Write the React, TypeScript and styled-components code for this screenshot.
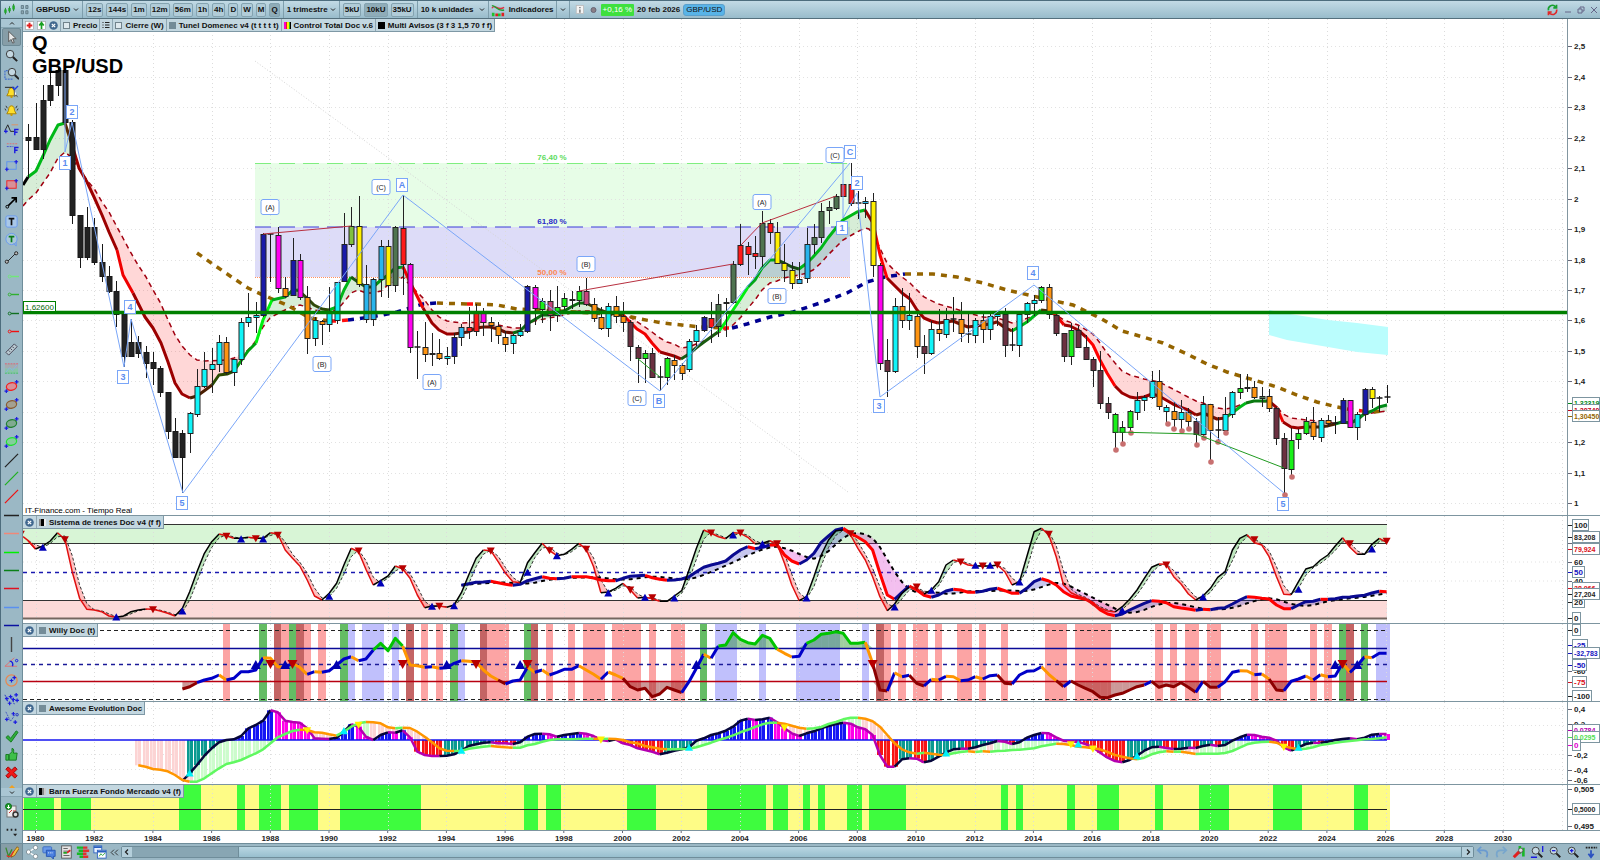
import React from "react";
import styled, { createGlobalStyle } from "styled-components";

const GlobalStyle = createGlobalStyle`
  * { box-sizing: border-box; }
  body { margin: 0; background: #fff; }
  body, button, select, input { font-family: "Liberation Sans", Arial, sans-serif; font-size: 8px; color: #111; }
`;

/* ---------- page frame ---------- */

const Page = styled.div`
  display: grid;
  grid-template-rows: 19px 1fr 17px;
  min-height: 100vh;
`;
const Toolbar = styled.header`
  display: flex;
  align-items: center;
  background: linear-gradient(#c2dae5, #99bccb);
  border-top: 1px solid #4d6d7d;
  border-bottom: 1px solid #55707d;
  border-left: 1px solid #4d6d7d;
  padding-left: 1px;
  overflow: hidden;
  white-space: nowrap;
`;
const Group = styled.div<{ $pad?: number; $gap?: number; $open?: boolean }>`
  display: flex;
  align-items: center;
  align-self: stretch;
  gap: ${(p) => p.$gap ?? 3}px;
  padding: 0 ${(p) => p.$pad ?? 3}px;
  border-right: ${(p) => (p.$open ? 0 : 1)}px solid #7e9eac;
`;
const TimeButton = styled.button<{ $on?: boolean }>`
  height: 14px;
  padding: 0 1px;
  border: 1px solid #84a3b0;
  border-radius: 2px;
  background: ${(p) => (p.$on ? "#8facb8" : "#b1ccd8")};
  font-weight: 700;
  line-height: 12px;
`;
const Picker = styled.label<{ $w: number }>`
  display: flex;
  align-items: center;
  width: ${(p) => p.$w}px;
  select {
    appearance: none;
    flex: 1;
    min-width: 0;
    border: 0;
    padding: 0;
    background: transparent;
    font-weight: 700;
    line-height: 12px;
  }
`;
const PlainButton = styled.button`
  display: flex;
  align-items: center;
  gap: 4px;
  padding: 0;
  border: 0;
  background: transparent;
  font-weight: 700;
`;
const Change = styled.span`
  height: 12px;
  padding: 0 2px;
  background: #3fe03f;
  color: #fff;
  border-radius: 1px;
  line-height: 12px;
`;
const DateText = styled.span`
  font-weight: 700;
`;
const PairTag = styled.span`
  height: 12px;
  padding: 0 2px;
  border: 1px solid #5aa0cc;
  border-radius: 3px;
  background: #58b4e8;
  line-height: 10px;
`;
const Spacer = styled.span`
  flex: 1;
`;

const Middle = styled.main`
  display: grid;
  grid-template-columns: 23px minmax(0, 1fr);
`;
const Sidebar = styled.nav`
  display: flex;
  flex-direction: column;
  background: #9bb8c5;
  border-left: 1px solid #4d6d7d;
  border-right: 1px solid #6f8d9a;
`;
const Fold = styled.button`
  height: 9px;
  padding: 0;
  border: 0;
  border-bottom: 1px solid #86a5b2;
  background: #a9c6d3;
  display: grid;
  place-items: center;
`;
const ToolList = styled.div`
  flex: 1;
  display: grid;
  grid-auto-rows: 1fr;
`;
const Tool = styled.button<{ $on?: boolean }>`
  display: grid;
  place-items: center;
  min-height: 0;
  padding: 0;
  margin: 0 1px;
  border: 1px solid ${(p) => (p.$on ? "#6e8b97" : "transparent")};
  border-radius: 2px;
  background: ${(p) => (p.$on ? "#869da7" : "transparent")};
`;
const NextTool = styled.div`
  height: 6px;
  display: grid;
  place-items: end center;
`;
const SideFoot = styled.div`
  height: 46px;
  display: flex;
  flex-direction: column;
  align-items: center;
  justify-content: space-evenly;
`;

const Charts = styled.div`
  display: grid;
  grid-template-rows: minmax(497px, 1fr) 108px 78px 83px 46px 12px;
`;
const Panel = styled.section`
  position: relative;
  display: grid;
  grid-template-columns: minmax(0, 1fr) 33px;
  border-bottom: 1px solid #7d95a0;
  min-height: 0;
`;
const Plot = styled.svg`
  display: block;
  width: 100%;
  height: 100%;
`;
const Scale = styled.svg`
  display: block;
  width: 33px;
  height: 100%;
  border-left: 1px solid #8296a0;
  text {
    font-weight: 700;
  }
`;
const Tabs = styled.div`
  position: absolute;
  left: 0;
  top: 0;
  display: flex;
  height: 13px;
  border: 1px solid #7e98a5;
  border-left: 0;
  border-top: 0;
  background: #c3d7e0;
`;
const Tab = styled.label`
  display: flex;
  align-items: center;
  gap: 3px;
  padding: 0 2px;
  font-weight: 700;
  white-space: nowrap;
  border-left: 1px solid #8fa7b3;
  &:first-child { border-left: 0; }
`;
const Tick = styled.input`
  appearance: none;
  width: 7px;
  height: 7px;
  margin: 0;
  border: 1px solid #71838c;
  background: #dfe9ee;
`;
const Swatch = styled.i<{ $fill: string }>`
  width: 7px;
  height: 7px;
  background: ${(p) => p.$fill};
`;
const IconButton = styled.button`
  display: grid;
  place-items: center;
  padding: 0;
  border: 0;
  background: transparent;
`;
const Title = styled.h1`
  position: absolute;
  left: 9px;
  top: 13px;
  margin: 0;
  font-size: 20px;
  line-height: 23px;
  color: #000;
  pointer-events: none;
`;
const Source = styled.small`
  position: absolute;
  left: 2px;
  bottom: 0;
  font-size: 8px;
  line-height: 9px;
  color: #000;
`;
const YearRow = styled.svg`
  display: block;
  width: 100%;
  height: 12px;
  text {
    font-weight: 700;
    font-size: 8px;
  }
`;

const Footer = styled.footer`
  display: flex;
  align-items: center;
  background: #9bb8c5;
  border-top: 1px solid #6f8d9a;
  border-left: 1px solid #4d6d7d;
`;
const FootTools = styled.div<{ $gap?: number }>`
  display: flex;
  align-items: center;
  gap: ${(p) => p.$gap ?? 3}px;
  padding: 0 2px;
`;
const PencilCell = styled.div`
  display: grid;
  place-items: center;
  width: 22px;
  height: 100%;
  background: #869da7;
  border-right: 1px solid #6f8d9a;
`;
const ScrollBar = styled.div`
  flex: 1;
  display: grid;
  grid-template-columns: 10px 106px minmax(0, 1fr) 11px;
  height: 12px;
  border: 1px solid #6f8d9a;
  border-radius: 2px;
  background: #88a6b3;
`;
const ScrollEnd = styled.button`
  display: grid;
  place-items: center;
  padding: 0;
  border: 0;
  background: #b4cfdb;
`;
const Thumb = styled.div`
  grid-column: 3;
  background: linear-gradient(#b9d6e2, #98bfce);
  border: solid #6f8d9a;
  border-width: 0 1px;
`;

/* ---------- icons ---------- */

const Ico = ({ children, s = 16 }: { children: React.ReactNode; s?: number }) => (
  <svg width={s} height={s} viewBox="0 0 16 16" fill="none" stroke="#222" strokeWidth="1" aria-hidden>
    {children}
  </svg>
);
const Chevron = ({ up }: { up?: boolean }) => (
  <svg width="6" height="5" viewBox="0 0 6 5" fill="none" stroke="#222" aria-hidden>
    <path d={up ? "M1 3.5 3 1.5 5 3.5" : "M1 1.5 3 3.5 5 1.5"} />
  </svg>
);
const plus = (x: number, y: number) => <path key={`${x}-${y}`} d={`M${x - 2} ${y}h4M${x} ${y - 2}v4`} stroke="#1a1ae0" strokeWidth="1.3" />;
const lens = (
  <>
    <circle cx="6.5" cy="6.5" r="4" fill="#c4d8e2" stroke="#333" />
    <path d="M9.5 9.5 14 14" stroke="#222" strokeWidth="2.2" />
  </>
);
const bell = (
  <>
    <path d="M8 3c-2.500 0-3 2.500-3.200 5L3 11.500h10L11.200 8C11 5.500 10.500 3 8 3z" fill="#ffe02a" stroke="#a88000" />
    <circle cx="8" cy="12.500" r="1.300" fill="#c89a00" stroke="none" />
  </>
);
const pin = (c: string) => (
  <>
    <circle cx="6" cy="8" r="1.500" stroke={c} />
    <path d="M7.500 8H16" stroke={c} strokeWidth="1.500" />
  </>
);
const ellipse = (c: string, f: string) => (
  <>
    <ellipse cx="8" cy="8" rx="5.500" ry="4" transform="rotate(-12 8 8)" stroke={c} fill={f} strokeWidth="1.300" />
    {plus(2.5, 13)}
    {plus(13.5, 3)}
  </>
);
const rectTool = (c: string, f: string) => (
  <>
    <rect x="3" y="4" width="10" height="8" stroke={c} fill={f} />
    {plus(3, 12)}
    {plus(13, 4)}
  </>
);
const slash = (c: string) => <path d="M1 15 15 1" stroke={c} strokeWidth="1.300" />;
const flat = (c: string) => <path d="M0 8h16" stroke={c} strokeWidth="1.600" />;

const tools: [string, React.ReactNode][] = [
  ["Puntero", <path d="M5 1.500v11l2.500-2.500 1.700 4 1.700-.7-1.700-4H13z" fill="#e8e8e8" stroke="#555" />],
  ["Zoom", lens],
  ["Zoom de zona", <><g transform="translate(2)">{lens}</g><path d="M4 5H1v9h9" stroke="#2a5ad0" strokeDasharray="2 1" /></>],
  ["Alerta", <>{bell}<path d="M1 2.500h10" stroke="#222" /><path d="M9 2l2 3 4-4" stroke="#1a3ae0" strokeWidth="1.500" /><path d="M11 5v7l2-1.500 1.500 2.500" stroke="#555" fill="#fff" /></>],
  ["Alarmas", <>{bell}<path d="M2 3 3.500 5.500M14 3l-1.500 2.500M1 6l1 2M15 6l-1 2" stroke="#333" /></>],
  ["Fibonacci", <><path d="M1 9 4 3 7 10h4" stroke="#222" /><path d="M8 3h7" stroke="#e09060" />{plus(2, 10)}<path d="M11.500 14V8h4M11.500 11h3" stroke="#1a1ae0" strokeWidth="1.500" /></>],
  ["Extensión", <><path d="M3 4h12" stroke="#e07070" strokeDasharray="2 1" /><path d="M3 7h7" stroke="#4050d0" strokeDasharray="2 1" /><path d="M11.500 14V8h4M11.500 11h3" stroke="#1a1ae0" strokeWidth="1.500" /></>],
  ["Zona", rectTool("#5a90f0", "none")],
  ["Rectángulo", rectTool("#f02020", "#d89098")],
  ["Flecha", <><path d="M3 13 12 4M8 3h5v5" stroke="#000" strokeWidth="1.800" /><circle cx="3.500" cy="12.500" r="1.500" stroke="#000" fill="#9bb8c5" /></>],
  ["Texto", <><rect x="2" y="2" width="12" height="12" rx="2" fill="#a9c8e8" stroke="#6a9af0" /><path d="M5 5h6M8 5v7" stroke="#111" strokeWidth="1.800" /></>],
  ["Comentario", <><circle cx="8" cy="7.500" r="6" fill="#a9c8d8" stroke="#6a9af0" /><path d="M10 12l3 3v-4" stroke="#6a9af0" /><path d="M5 5h6M8 5v6" stroke="#0a7a1a" strokeWidth="1.800" /></>],
  ["Segmento", <><path d="M4 12 12 4" /><circle cx="3" cy="12.500" r="1.700" fill="#bbb" /><circle cx="13" cy="3.500" r="1.700" fill="#bbb" /></>],
  ["Horizontal verde claro", pin("#70e878")],
  ["Horizontal verde", pin("#30b030")],
  ["Horizontal verde oscuro", pin("#107020")],
  ["Horizontal roja", pin("#f01010")],
  ["Regla", <><path d="M2 11 11 2l3 3-9 9z" fill="#b8c8d0" stroke="#445" /><path d="M5 9l1.500 1.500M7 7l1.500 1.500M9 5l1.500 1.500" stroke="#445" /></>],
  ["Canal de regresión", <><rect x="1" y="3" width="14" height="5" fill="#a4acb0" stroke="none" /><rect x="1" y="8" width="14" height="5" fill="#88c4a8" stroke="none" /><path d="M1 3h14" stroke="#e06070" strokeDasharray="2 1" /><path d="M1 13h14" stroke="#40c060" strokeDasharray="2 1" /><path d="M2 12l4-5 3 3 5-6" stroke="#8ab0e8" /></>],
  ["Elipse roja", ellipse("#f02020", "#d89098")],
  ["Elipse marrón", ellipse("#8a5a30", "#a4a090")],
  ["Elipse verde", ellipse("#208030", "#80aa90")],
  ["Elipse verde clara", ellipse("#20e030", "#84ce9c")],
  ["Recta", slash("#222")],
  ["Recta verde", slash("#20b020")],
  ["Recta roja", slash("#f01010")],
  ["Nivel negro", flat("#222")],
  ["Nivel rosa", flat("#f08878")],
  ["Nivel lima", flat("#00f000")],
  ["Nivel verde", flat("#0a8018")],
  ["Nivel rojo", flat("#e01020")],
  ["Nivel celeste", flat("#5a90f0")],
  ["Nivel azul", flat("#0a10a0")],
  ["Vertical", <path d="M8 0v16" stroke="#444" strokeWidth="1.500" />],
  ["Ángulo", <><path d="M1 12 11 3M1 12h13" stroke="#e07070" /><path d="M6 6.500c3 0 4 3 3 5.500" stroke="#1a1ae0" strokeWidth="1.500" /><circle cx="13.500" cy="6" r="1.300" stroke="#1a1ae0" /></>],
  ["Círculo", <><circle cx="8" cy="8" r="6" stroke="#e88850" strokeWidth="1.300" />{plus(8, 8)}{plus(11, 5)}</>],
  ["Ondas", <><path d="M1 3 4 10M8 6l3 7" stroke="#2030c0" strokeDasharray="2 1" />{[[3, 7], [7, 5], [6, 12], [10, 8], [13, 3], [14, 9]].map(([a, b]) => plus(a, b))}</>],
  ["Ondas ABC", <><path d="M2 2 7 12 12 5" stroke="#2030c0" strokeDasharray="1 1" />{plus(3, 10)}{plus(10, 4)}{plus(12, 13)}<circle cx="14" cy="5" r="1.300" stroke="#2030c0" /></>],
  ["Aceptar", <path d="M2 9l2.500-2 2.500 3 6-8 2 1.500L7.500 14z" fill="#2fae3a" stroke="#157a20" />],
  ["Me gusta", <path d="M2 8h3v6H2zM5.500 8 8.500 5V1.500c2.500 0 2 3 1.500 5h4L13 14H5.500z" fill="#3fc04a" stroke="#157a20" />],
  ["Borrar", <path d="M2 4.500 4.500 2 8 5.500 11.500 2 14 4.500 10.500 8 14 11.500 11.500 14 8 10.500 4.500 14 2 11.500 5.500 8z" fill="#f01818" stroke="#a00000" />],
];

const Gear = () => (
  <Ico>
    <rect x="3" y="3" width="9" height="11" fill="#eee" stroke="#777" />
    <circle cx="4.500" cy="3.500" r="3" fill="#1fa02a" stroke="#0a6a18" />
    <path d="M4.500 2v3M3 4l1.500 1.500L6 4" stroke="#fff" />
    <path d="M5 10l3-3M9 8h3" stroke="#c33" />
    <circle cx="11.500" cy="11.500" r="2.500" fill="#ddd" stroke="#333" strokeWidth="1.500" />
  </Ico>
);
const Pencils = () => (
  <Ico s={14}>
    <path d="M1 3l3 10 4-8" stroke="#3a8a30" strokeWidth="1.500" />
    <path d="M14 2 8 10l-1 4 4-2 5-8z" fill="#f0c040" stroke="#8a5a10" />
    <path d="M2 12c3 3 5 1 8-5" stroke="#e03020" strokeWidth="1.300" />
  </Ico>
);

/* ---------- chart helpers ---------- */

const X0 = 35.5;
const STEP = 7.343;
const qx = (q: number) => X0 + STEP * q;
const qy = (v: number) => 510 + v / 3;
const GRID_X = Array.from({ length: 27 }, (_, i) => X0 + 58.7 * i);

type Pt = [number, number];
const line = (pts: Pt[]) => pts.map(([a, b]) => `${a.toFixed(1)},${b.toFixed(1)}`).join(" ");

const Years = ({ top, height }: { top: number; height: number }) => (
  <g stroke="#dcdcdc" strokeDasharray="1 3">
    {GRID_X.map((x) => <path key={x} d={`M${Math.round(x) + 0.5} ${top}v${height}`} />)}
  </g>
);
const Rows = ({ at }: { at: number[] }) => (
  <g stroke="#e2e2e2" strokeDasharray="1 3">
    {at.map((y) => <line key={y} x1="23" x2="6000" y1={y} y2={y} />)}
  </g>
);
const Arrow = ({ x, y, up, c, s = 4 }: { x: number; y: number; up?: boolean; c: string; s?: number }) => (
  <path d={up ? `M${x - s} ${y + s * 0.8}h${2 * s}L${x} ${y - s}z` : `M${x - s} ${y - s * 0.8}h${2 * s}L${x} ${y + s}z`} fill={c} />
);

const Runs = ({ from, data, pick, width }: { from: number; data: number[]; pick: (a: number, b: number) => string; width: number }) => {
  const runs: { c: string; pts: Pt[] }[] = [];
  for (let i = 1; i < data.length; i++) {
    const c = pick(data[i - 1], data[i]);
    const last = runs[runs.length - 1];
    const end: Pt = [qx(from + i), qy(data[i])];
    if (last && last.c === c) last.pts.push(end);
    else runs.push({ c, pts: [[qx(from + i - 1), qy(data[i - 1])], end] });
  }
  return (
    <g fill="none" strokeWidth={width} strokeLinejoin="round">
      {runs.map((r, i) => <polyline key={i} points={line(r.pts)} stroke={r.c} />)}
    </g>
  );
};
const Between = ({ from, a, b, over, under }: { from: number; a: number[]; b: number[]; over: string; under: string }) => (
  <g>
    {a.slice(1).map((v, i) => (
      <polygon
        key={i}
        points={line([[qx(from + i), qy(a[i])], [qx(from + i + 1), qy(v)], [qx(from + i + 1), qy(b[i + 1])], [qx(from + i), qy(b[i])]])}
        fill={a[i] + v < b[i] + b[i + 1] ? over : under}
      />
    ))}
  </g>
);
const average = (d: number[], n: number) =>
  d.map((_, i) => {
    const part = d.slice(Math.max(0, i - n + 1), i + 1);
    return part.reduce((s, v) => s + v, 0) / part.length;
  });

/* ---------- price data ---------- */

const INK: Record<string, string> = {
  k: "#222222", c: "#10f4f8", o: "#ff9410", b: "#1a1aa8", m: "#ff00f0", s: "#28b4ec", y: "#fff000", l: "#80c040",
  g: "#18f018", d: "#4f7450", r: "#ff1a1a", p: "#c8447c", n: "#6b3040",
};
const CANDLES = `k124,137,140,178 k103,137,149,150 k85,100,149,159 k72,85,100,106 k68,70,85,96 k62,70,122,123 k120,122,215,224 k215,215,257,268
k207,227,257,260 k218,227,262,265 k244,262,276,282 k266,276,291,293 k281,291,314,327 k314,314,356,367 k319,342,356,357 k336,342,353,358
k346,352,363,378 k352,362,368,385 k366,368,392,397 k392,392,431,439 k418,431,457,457 k430,433,457,493 c412,413,433,453 c369,386,414,417
c352,369,386,388 c348,364,369,393 c335,342,364,372 o337,342,372,375 c359,359,372,386 c318,322,359,365 c293,317,322,327 c302,315,317,333
b233,234,315,317 k234,234,234,282 m227,235,288,293 o277,288,296,298 b238,260,295,296 m254,260,297,300 o286,297,338,354 c317,320,338,346
o320,321,324,345 c287,312,324,332 c282,282,320,324 b213,244,281,281 l207,226,244,247 y196,226,284,287 s265,284,319,323 s278,279,319,326
s240,246,279,297 y240,246,285,298 d226,227,285,292 r195,228,264,295 m263,264,347,353 k331,347,347,379 o322,347,354,362 c333,353,354,366
o339,353,358,360 c347,356,358,365 b333,337,356,364 s324,327,337,346 r307,327,331,339 r304,313,331,336 m308,313,322,336 o317,322,325,342
o322,326,335,344 o331,337,344,352 c334,335,343,354 c324,331,335,337 b285,286,331,333 m285,287,308,325 g298,301,309,323 p290,301,315,331
g286,307,315,322 g293,298,306,310 p291,299,300,309 g286,291,300,307 p278,291,304,306 o298,304,318,322 o307,317,328,330 c303,306,328,337
o296,306,316,323 o302,316,322,332 n320,322,346,361 n345,347,358,383 g350,353,358,383 n348,353,377,377 k366,377,377,391 g357,358,377,385
o355,360,365,380 o363,365,373,380 c339,341,369,372 c325,330,341,346 b316,317,330,332 r302,318,327,343 d294,304,326,337 d298,302,303,337
d261,264,302,304 r224,245,264,266 r242,246,254,275 r236,253,256,269 d211,223,256,267 r219,223,232,244 y222,232,263,264 y244,263,270,282
y262,270,283,289 s262,279,283,284 s228,244,278,283 d224,237,244,254 d203,211,237,243 d201,207,210,224 d194,196,208,210 r184,184,196,197
r163,184,203,206 k191,203,203,219 s197,201,203,218 y193,201,265,277 m263,265,363,370 n339,360,371,397 c298,306,371,373 o288,306,320,328
c293,315,320,330 o313,316,346,358 n335,346,353,374 c321,329,353,355 o309,329,333,341 c308,319,334,338 k297,319,319,332 o302,319,333,342
k313,334,334,343 c318,320,335,343 o313,320,329,343 c313,316,329,340 c311,314,316,326 n308,314,345,357 k328,345,345,351 c313,314,345,357
c302,303,314,323 c295,300,303,316 g286,287,300,303 o284,287,314,319 n313,315,333,336 n333,333,356,362 g323,330,356,365 n326,330,347,348
n335,347,359,360 n357,359,370,387 n351,370,403,409 n397,403,412,419 g413,414,432,448 g421,427,432,443 g410,411,427,431 c392,400,412,420
c395,397,400,411 c371,381,397,399 o370,381,406,410 c405,407,411,423 o402,411,419,430 c400,412,419,431 o408,412,421,428 n418,421,434,443
c396,404,434,437 o404,404,430,462 k417,430,430,442 c397,414,430,433 c391,392,414,418 g374,388,392,399 g374,387,388,392 o381,387,397,399
d387,396,398,407 o389,396,408,412 n407,408,438,445 n433,438,468,493 g428,440,469,475 g429,433,439,449 g417,421,433,435 o407,422,436,440
c418,420,437,442 o415,420,423,427 k416,423,423,434 b398,400,423,423 m400,400,427,427 c412,414,427,440 b388,389,414,421 y387,389,398,408
k396,398,398,412 k385,397,397,403`
  .split(/\s+/)
  .map((t) => [t[0], ...t.slice(1).split(",").map(Number)] as [string, number, number, number, number]);

const FAST: [string, string][] = [
  ["#000", "23,185 28,177"],
  ["#00b818", "36,171 43,156 50,140 58,125 65,123"],
  ["#5a2800", "72,145"],
  ["#9c0000", "79,168 87,182 94,197 102,215 109,232 117,250"],
  ["#f00000", "123,275 133,293"],
  ["#9c0000", "145,317 153,328 161,343 168,362 175,383 182,394 190,398"],
  ["#4a1e00", "197,396 204,391 212,385"],
  ["#2a4a00", "219,375 227,374 234,371"],
  ["#00a010", "241,361 248,351 256,343"],
  ["#00f010", "263,320 272,300"],
  ["#00a818", "285,297 292,291 298,290"],
  ["#304a08", "307,298 314,305 322,309 329,310"],
  ["#00b818", "337,307 344,290 351,277"],
  ["#1a5a10", "358,282 366,287 373,287"],
  ["#009818", "381,280 388,275 395,268 403,267"],
  ["#f00000", "410,282 415,292 423,308"],
  ["#9c0000", "432,323 439,330 447,334 454,334"],
  ["#6a1000", "461,333 468,332 476,328 484,327 490,327 498,329 505,332 513,333"],
  ["#0a6a10", "520,331 527,324 534,320 542,315 549,315 557,314 564,311 571,307 579,303 586,303"],
  ["#3a3a00", "594,307 600,310 608,313 623,315"],
  ["#f00000", "630,322 637,329 645,334 652,343 660,352"],
  ["#9c0000", "667,354 674,356 681,359"],
  ["#1a5a10", "689,354 696,348 704,342 711,337 718,332"],
  ["#00f010", "725,323 733,310 741,298 748,287"],
  ["#00a818", "755,280 762,268 770,260 777,260"],
  ["#1a4a10", "784,263 792,267 799,269"],
  ["#00b818", "807,263 813,257 821,248 828,238 836,228 843,220 850,216 857,212 865,210"],
  ["#9c0000", "873,223"],
  ["#ff0000", "880,255 887,278"],
  ["#9c0000", "902,293 910,299 917,310 924,318 931,321 938,323"],
  ["#7a1000", "946,322 953,321 960,324 968,327 975,326 983,325 990,324 997,322 1004,327 1012,331"],
  ["#00b818", "1019,327 1027,322 1034,316 1041,310"],
  ["#4a2a00", "1049,311"],
  ["#f00000", "1056,315 1064,325"],
  ["#9c0000", "1070,326 1078,330 1086,337"],
  ["#ff0000", "1093,345 1100,360 1107,373 1115,386"],
  ["#9c0000", "1122,393 1130,397 1136,398 1144,397 1152,394 1159,396 1166,400 1173,404 1180,407 1188,410 1196,415"],
  ["#7a1000", "1203,413 1210,416 1217,419 1225,418"],
  ["#00b818", "1232,413 1240,407 1246,403"],
  ["#0a7a10", "1254,401 1262,401 1269,401"],
  ["#9c0000", "1277,408"],
  ["#f00000", "1283,422"],
  ["#9c0000", "1291,427 1298,428 1306,427"],
  ["#4a2000", "1320,427 1327,426 1335,424"],
  ["#008a18", "1342,422 1350,423 1357,420 1364,414 1372,411 1379,407 1387,405"],
];
const SLOW =
  "23,206 28,200 36,193 43,183 50,173 58,158 65,152 72,158 79,169 87,180 95,190 102,202 109,212 117,227 124,240 131,253 138,265 146,277 153,290 160,302 168,320 175,335 182,346 190,355 197,360 205,361 227,360 234,358 241,355 248,350 255,342 263,327 270,318 277,314 285,310 292,307 300,305 307,307 314,310 329,312 337,310 344,302 351,293 358,290 366,293 373,293 381,291 388,285 395,282 403,277 408,283 415,290 423,298 432,310 439,317 447,321 461,323 484,322 498,325 513,328 520,328 527,325 534,321 549,318 564,315 579,311 594,311 608,313 623,316 630,317 645,327 652,332 660,338 667,342 674,344 681,348 689,347 696,344 704,341 718,333 725,330 733,325 741,317 748,308 755,300 762,290 770,283 777,281 784,278 799,275 807,273 813,270 821,263 828,255 836,247 843,240 850,236 857,232 865,228 869,229 877,242 887,263 895,271 902,277 910,283 924,297 938,304 953,308 968,313 983,317 997,318 1004,320 1012,323 1019,321 1034,316 1041,312 1056,315 1064,320 1078,325 1093,334 1100,343 1107,353 1115,363 1122,371 1130,375 1144,379 1159,382 1173,389 1188,397 1196,401 1203,403 1217,408 1225,409 1232,408 1240,405 1254,401 1269,402 1277,407 1283,414 1291,418 1306,420 1320,421 1335,423 1350,422 1364,415 1372,413 1387,411";
const parse = (s: string): Pt[] => s.split(" ").map((p) => p.split(",").map(Number) as Pt);
const at = (pts: Pt[], x: number) => {
  for (let i = 1; i < pts.length; i++) {
    const [x1, y1] = pts[i];
    const [x0, y0] = pts[i - 1];
    if (x <= x1) return y0 + ((y1 - y0) * (x - x0)) / (x1 - x0);
  }
  return pts[pts.length - 1][1];
};
const FAST_ALL = parse(FAST.map((r) => r[1]).join(" "));
const SLOW_ALL = parse(SLOW);
const LONG: [string, string][] = [
  ["#946400", "197,253 217,267 233,278 248,288 263,295 270,298 287,305 310,318 330,321"],
  ["#ff1010", "337,321 348,320"],
  ["#000090", "357,319 383,315 397,312 423,304 437,303"],
  ["#946400", "467,304"],
  ["#ff1010", "475,304"],
  ["#946400", "497,305 517,309 560,311 623,315 640,319 663,323 700,327 723,328"],
  ["#ff1010", "732,328"],
  ["#000090", "747,324 770,317 793,312 823,302 847,293 867,282 885,277 905,274"],
  ["#946400", "933,274 957,277 983,283 1007,290 1037,297 1073,305 1100,318 1122,331 1143,337 1163,343 1187,354 1207,364 1227,372 1257,381 1277,387 1297,395 1317,402 1337,407 1347,409"],
  ["#ff1010", "1362,411"],
  ["#946400", "1373,412 1382,411"],
];
const WAVES: [string, number, number][] = [
  ["2", 72, 112], ["1", 65, 163], ["3", 123, 377], ["4", 130, 307], ["5", 182, 503], ["A", 402, 185], ["B", 659, 401],
  ["C", 850, 152], ["2", 857, 183], ["1", 842, 228], ["3", 879, 406], ["4", 1033, 273], ["5", 1283, 504],
];
const SUBWAVES: [string, number, number][] = [
  ["(A)", 270, 207], ["(C)", 381, 187], ["(B)", 322, 364], ["(A)", 432, 382], ["(B)", 586, 264], ["(C)", 637, 398],
  ["(A)", 762, 202], ["(B)", 777, 296], ["(C)", 835, 155],
];
const DOTS: Pt[] = [[1116, 450], [1123, 444], [1131, 433], [1168, 424], [1174, 429], [1182, 431], [1189, 429], [1197, 445], [1204, 438], [1211, 462], [1218, 442], [1226, 433], [1292, 477], [1285, 495]];
const priceY = (p: number) => 503.3 - 304.7 * (p - 1);
const PRICES = Array.from({ length: 16 }, (_, i) => (25 - i) / 10);

const colored = (list: [string, string][], extra: React.SVGProps<SVGPolylineElement>) => {
  let prev = "";
  return list.map(([c, pts], i) => {
    const full = prev ? `${prev} ${pts}` : pts;
    prev = pts.split(" ").pop() as string;
    return <polyline key={i} points={full} stroke={c} fill="none" {...extra} />;
  });
};

const PricePlot = () => {
  const xs: number[] = [];
  for (let x = 23; x <= 1387; x += 4) xs.push(x);
  return (
    <Plot>
      <g transform="translate(-23,-19)">
        <rect x="255" y="163" width="595" height="64" fill="#e7fde7" />
        <rect x="255" y="227" width="595" height="50" fill="#dddcf8" />
        <Years top={19} height={1200} />
        <Rows at={PRICES.map((p) => Math.round(priceY(p)) + 0.5)} />
        <path d="M255 61 848 492" stroke="#d4d4d4" strokeDasharray="1 2" />
        <path d="M255 163.500H850" stroke="#80ee80" strokeDasharray="16 8" />
        <path d="M255 227H850" stroke="#3a3ad8" strokeDasharray="16 8" />
        <path d="M255 277.500H850" stroke="#ff9060" strokeDasharray="1 1" />
        <g fontSize="8" fontWeight="700" textAnchor="middle">
          <text x="552" y="160" fill="#60dc60">76,40 %</text>
          <text x="552" y="224" fill="#2a2ac8">61,80 %</text>
          <text x="552" y="275" fill="#ff8850">50,00 %</text>
        </g>
        <polygon points="1269,310 1290,314 1328,320 1357,323 1388,327 1388,355 1357,352 1328,347 1287,340 1269,335" fill="#bafdfd" />
        {xs.slice(1).map((x, i) => {
          const a = xs[i];
          const f0 = at(FAST_ALL, a), f1 = at(FAST_ALL, x), s0 = at(SLOW_ALL, a), s1 = at(SLOW_ALL, x);
          return <polygon key={x} points={line([[a, f0], [x, f1], [x, s1], [a, s0]])} fill={f0 + f1 < s0 + s1 ? "#008c0028" : "#ff000028"} />;
        })}
        <polyline points={SLOW} fill="none" stroke="#a00010" strokeWidth="1.500" strokeDasharray="5 4" />
        {colored(LONG, { strokeWidth: 3.5, strokeDasharray: "6 6" })}
        {colored(FAST, { strokeWidth: 3, strokeLinejoin: "round" })}
        {CANDLES.map(([c, h, t, b, l], i) => {
          const x = Math.round(qx(i - 1)) + 0.5;
          return (
            <g key={i} stroke={c === "k" ? "#181818" : "#222"}>
              <path d={`M${x} ${h}V${l}`} />
              {b - t < 2 && c === "k" ? <path d={`M${x - 3} ${t}h6`} strokeWidth="1.500" /> : <rect x={x - 2.5} y={t + 0.5} width="5" height={Math.max(1, b - t)} fill={INK[c]} />}
            </g>
          );
        })}
        <line x1="23" x2="6000" y1="312.500" y2="312.500" stroke="#008000" strokeWidth="3.500" />
        <rect x="23.500" y="301.500" width="32" height="10" fill="#fff" stroke="#008000" />
        <text x="25" y="310" fontSize="8" fill="#006800">1,62600</text>
        <g fill="#c87070">{DOTS.map(([x, y]) => <circle key={x} cx={x} cy={y} r="2.800" />)}</g>
        <g fill="none" stroke="#b83040">
          <polyline points="263,234 351,226" />
          <polyline points="579,291 733,264" />
          <polyline points="741,245 762,223 836,196" />
        </g>
        <g fill="none" stroke="#209a20">
          <polyline points="637,358 660,377" />
          <polyline points="1115,432 1196,434 1284,468" />
        </g>
        <g fill="none" stroke="#7aa6f8">
          <polyline points="65,62 65,152 72,122 124,367 131,319 183,493 403,195 660,391 850,163" />
          <polyline points="843,163 843,218 857,193 880,397 1034,285 1284,493" />
        </g>
        <g textAnchor="middle">
          {WAVES.map(([t, x, y], i) => (
            <g key={i}>
              <rect x={x - 5.5} y={y - 6.5} width="11" height="13" fill="#fff" stroke="#7aa6f8" />
              <text x={x} y={y + 3} fontSize="9" fontWeight="700" fill="#5a8cf0">{t}</text>
            </g>
          ))}
          {SUBWAVES.map(([t, x, y], i) => (
            <g key={i}>
              <rect x={x - 9} y={y - 7.5} width="18" height="15" rx="2" fill="#fff" stroke="#7aa6f8" />
              <text x={x} y={y + 3} fontSize="7" fill="#222">{t}</text>
            </g>
          ))}
        </g>
      </g>
    </Plot>
  );
};

/* ---------- train system ---------- */

const TRAIN = [92, 117, 108, 93, 68, 88, 185, 265, 298, 300, 305, 318, 322, 318, 305, 300, 297, 298, 303, 310, 318, 295, 245, 185, 130, 95, 72, 77, 85, 85, 82, 85, 85, 68, 72, 120, 145, 168, 210, 258, 270, 250, 220, 165, 115, 125, 178, 225, 212, 198, 168, 176, 205, 255, 293, 288, 288, 292, 285, 248, 195, 145, 120, 122, 155, 190, 215, 218, 158, 128, 100, 122, 137, 133, 118, 100, 118, 170, 248, 246, 235, 220, 240, 264, 262, 266, 274, 274, 258, 242, 180, 115, 60, 70, 80, 86, 68, 70, 82, 102, 100, 92, 102, 160, 225, 272, 260, 200, 135, 90, 62, 60, 75, 115, 150, 200, 260, 302, 282, 250, 230, 235, 252, 240, 215, 165, 150, 155, 165, 168, 168, 168, 165, 185, 225, 215, 140, 65, 55, 75, 140, 225, 248, 258, 266, 285, 295, 303, 306, 290, 268, 240, 205, 172, 162, 163, 200, 222, 252, 270, 258, 235, 202, 185, 120, 85, 74, 98, 105, 140, 200, 253, 254, 215, 177, 170, 150, 135, 108, 83, 112, 133, 133, 103, 85, 97];
const TREND = [226, 221, 217, 216, 214, 218, 223, 226, 223, 212, 206, 200, 205, 206, 205, 200, 200, 200, 204, 210, 212, 212, 205, 199, 197, 196, 203, 208, 211, 210, 207, 200, 185, 172, 165, 160, 153, 135, 120, 110, 116, 112, 105, 105, 135, 153, 162, 150, 130, 97, 78, 60, 55, 70, 82, 95, 120, 190, 255, 268, 247, 228, 240, 256, 262, 255, 243, 238, 240, 247, 247, 244, 238, 235, 242, 250, 250, 235, 215, 206, 213, 225, 245, 258, 263, 268, 280, 300, 312, 317, 312, 300, 290, 280, 272, 274, 278, 290, 294, 297, 301, 298, 299, 295, 293, 282, 270, 260, 262, 265, 267, 285, 296, 296, 285, 275, 274, 268, 268, 266, 262, 261, 258, 256, 249, 244, 245];
const TRAIN_SIG = average(TRAIN, 2);
const TREND_SIG = average(TREND, 5);
const TRAIN_UP: Pt[] = [[1, 113], [11, 322], [20, 304], [28, 88], [31, 88], [40, 260], [47, 220], [54, 290], [57, 288], [67, 188], [71, 138], [78, 250], [83, 263], [87, 265], [95, 76], [99, 103], [105, 265], [117, 292], [122, 242], [128, 167], [130, 167], [134, 217], [148, 302], [159, 262], [172, 239], [182, 118]];
const TRAIN_DOWN: Pt[] = [[-2, 72], [4, 88], [16, 298], [26, 78], [30, 85], [33, 75], [44, 122], [50, 175], [55, 288], [62, 122], [70, 121], [75, 117], [81, 239], [84, 262], [92, 68], [96, 68], [101, 100], [111, 70], [120, 230], [126, 155], [129, 167], [131, 164], [138, 72], [154, 164], [166, 88], [179, 100], [184, 93]];

const TrainPlot = () => (
  <Plot>
    <g transform="translate(-23,-516)">
      <rect x="23" y="525" width="1364" height="19" fill="#d8f5d6" />
      <rect x="23" y="600" width="1364" height="19" fill="#fcdad8" />
      <Years top={516} height={108} />
      <Rows at={[562, 581]} />
      <path d="M23 524.500H1387M23 543.500H1387M23 600.500H1387" stroke="#333" />
      <path d="M23 618.500H1387" stroke="#75665f" strokeWidth="2" />
      <path d="M23 572.500H1387" stroke="#1a1ab0" strokeWidth="1.500" strokeDasharray="4 4" />
      <Between from={58} a={TREND} b={TREND_SIG} over="#2020c040" under="#d000c040" />
      <Between from={-1} a={TRAIN} b={TRAIN_SIG} over="#00a00040" under="#ff000040" />
      <g fill="none" stroke="#000" strokeDasharray="3 2">
        <polyline points={line(TRAIN_SIG.map((v, i) => [qx(i - 1), qy(v)]))} stroke="#333" />
        <polyline points={line(TREND_SIG.map((v, i) => [qx(58 + i), qy(v)]))} strokeWidth="2" strokeDasharray="4 4" />
      </g>
      <path d={`M23 ${qy(80)}L${qx(-1)} ${qy(92)}L${qx(0)} ${qy(117)}`} fill="none" stroke="#e01010" strokeWidth="1.500" />
      <Runs from={58} data={TREND} width={3} pick={(a, b) => (b < a ? "#0a0a90" : "#ff0000")} />
      <Runs from={-1} data={TRAIN} width={1.5} pick={(a, b) => (b <= a ? "#000" : "#e01010")} />
      {TRAIN_UP.map(([q, v]) => <Arrow key={q} x={qx(q)} y={qy(v)} up c="#0000b8" />)}
      {TRAIN_DOWN.map(([q, v]) => <Arrow key={q} x={qx(q)} y={qy(v)} c="#b80000" />)}
    </g>
  </Plot>
);

/* ---------- willy ---------- */

const WILLY = [537, 530, 518, 510, 505, 495, 510, 505, 485, 485, 480, 443, 445, 470, 472, 460, 472, 493, 485, 487, 482, 465, 447, 440, 452, 447, 420, 400, 422, 385, 408, 465, 467, 472, 470, 475, 473, 460, 452, 454, 456, 480, 498, 510, 522, 513, 510, 472, 487, 480, 495, 487, 478, 478, 467, 480, 493, 508, 486, 495, 505, 530, 540, 535, 560, 552, 532, 540, 548, 515, 475, 433, 445, 408, 405, 368, 388, 398, 402, 376, 385, 418, 430, 441, 439, 400, 390, 373, 370, 365, 370, 400, 400, 397, 460, 540, 543, 488, 500, 496, 520, 528, 508, 510, 499, 500, 512, 510, 500, 507, 497, 495, 520, 522, 495, 484, 482, 470, 493, 512, 530, 513, 525, 535, 545, 562, 563, 555, 550, 540, 530, 525, 514, 532, 525, 530, 518, 532, 547, 514, 532, 532, 515, 487, 482, 483, 494, 492, 507, 540, 542, 514, 507, 498, 510, 494, 500, 498, 460, 487, 467, 440, 443, 430, 430];
const willyColor = (a: number, b: number) => {
  if ((a + b) / 2 < 414) return "#00c400";
  if ((b >= a && b >= 517) || (b < a && a > 524 && b > 517)) return "#8c0000";
  return b <= a ? "#0000c8" : "#ff9600";
};
const BANDS: Record<string, number[][]> = {
  "#fca4a4": [[26, 26], [34, 34], [37, 37], [39, 39], [53, 53], [55, 55], [62, 64], [70, 70], [73, 73], [75, 77], [79, 82], [84, 84], [87, 88], [116, 116], [118, 118], [120, 121], [123, 123], [126, 127], [129, 129], [132, 132], [138, 140], [142, 146], [153, 153], [155, 155], [157, 158], [160, 161], [166, 166], [168, 170], [174, 174], [176, 176]],
  "#64bc64": [[31, 31], [35, 35], [42, 42], [57, 57], [67, 67], [91, 91], [178, 178], [181, 181]],
  "#c46464": [[33, 33], [36, 36], [51, 51], [61, 61], [68, 68], [115, 115], [179, 179]],
  "#c0c0fc": [[43, 43], [45, 47], [49, 49], [58, 58], [93, 95], [99, 99], [104, 109], [113, 113], [183, 184]],
};
const blocks = (list: number[][], y: number, h: number, c: string) =>
  list.map(([a, b]) => {
    const x = Math.round(qx(a - 0.5));
    return <rect key={`${c}${a}`} x={x} y={y} width={Math.round(qx(b + 0.5)) - x} height={h} fill={c} />;
  });

const WillyPlot = () => (
  <Plot>
    <g transform="translate(-23,-624)">
      {Object.entries(BANDS).map(([c, list]) => blocks(list, 624, 78, c))}
      <Years top={624} height={78} />
      <path d="M23 630.500H1387M23 699.500H1387" stroke="#222" strokeDasharray="4 3" />
      <Between from={20} a={WILLY.map((v) => Math.min(v, 414))} b={WILLY.map(() => 414)} over="#00800060" under="none" />
      <Between from={20} a={WILLY.map((v) => Math.max(v, 514))} b={WILLY.map(() => 514)} over="none" under="#80000066" />
      <path d="M23 648.500H1387" stroke="#0a0a98" strokeWidth="1.500" />
      <path d="M23 664.500H1387" stroke="#1a1a98" strokeWidth="1.500" strokeDasharray="4 4" />
      <path d="M23 681.500H1387" stroke="#b80010" strokeWidth="1.500" />
      <Runs from={20} data={WILLY} width={3} pick={willyColor} />
      {[30, 34, 41, 56, 66, 90, 177, 180].map((q) => <Arrow key={q} x={qx(q)} y={665} up c="#0000b0" s={5} />)}
      {[32, 35, 50, 60, 67, 114, 178].map((q) => <Arrow key={q} x={qx(q)} y={664} c="#b80000" s={5} />)}
    </g>
  </Plot>
);

/* ---------- awesome ---------- */

const AO = [813, 790, 765, 737, 715, 697, 690, 688, 678, 655, 645, 632, 601, 607, 632, 636, 638, 655, 685, 686, 687, 683, 665, 643, 650, 680, 690, 675, 667, 668, 661, 682, 725, 735, 738, 738, 737, 733, 722, 708, 703, 698, 697, 700, 700, 702, 697, 680, 672, 671, 673, 680, 675, 672, 669, 671, 678, 690, 693, 688, 700, 705, 715, 720, 725, 733, 728, 722, 718, 712, 692, 685, 675, 670, 662, 650, 632, 626, 630, 628, 623, 637, 655, 670, 678, 670, 664, 655, 648, 642, 638, 641, 652, 658, 675, 735, 770, 770, 748, 745, 746, 757, 752, 740, 727, 718, 716, 716, 712, 705, 700, 693, 695, 702, 697, 683, 675, 669, 670, 682, 692, 694, 696, 702, 712, 728, 743, 753, 757, 750, 737, 722, 712, 710, 714, 717, 716, 713, 714, 708, 704, 708, 705, 692, 682, 674, 675, 680, 683, 692, 712, 722, 712, 702, 698, 699, 695, 690, 687, 685, 688, 683, 674, 672, 672];
const AO_SIG = [766, 770, 777, 779, 784, 795, 810, 815, 815, 805, 790, 775, 762, 757, 750, 740, 730, 718, 700, 682, 672, 663, 659, 660, 667, 668, 673, 677, 665, 650, 640, 636, 637, 640, 652, 655, 653, 654, 665, 680, 697, 715, 722, 723, 722, 716, 713, 710, 708, 710, 712, 713, 713, 706, 702, 695, 690, 688, 688, 688, 687, 686, 686, 687, 686, 687, 690, 697, 700, 708, 712, 716, 718, 718, 717, 716, 712, 705, 698, 690, 684, 676, 667, 659, 651, 643, 638, 638, 641, 647, 653, 656, 655, 651, 642, 636, 628, 623, 623, 626, 634, 650, 675, 700, 718, 727, 731, 728, 731, 734, 735, 730, 726, 724, 726, 724, 725, 723, 722, 720, 719, 717, 715, 709, 705, 701, 702, 705, 710, 712, 715, 718, 726, 735, 740, 745, 748, 743, 733, 727, 724, 725, 725, 728, 732, 731, 731, 731, 729, 723, 713, 703, 698, 696, 695, 698, 708, 714, 718, 716, 712, 705, 702, 698, 695, 693, 691, 688, 687, 685, 682];
const bar = (q: number, v: number, c: string, key: string) => {
  const y = qy(v);
  const x = Math.round(qx(q)) - 3;
  const top = Math.min(y, 740);
  const h = Math.abs(y - 740);
  return (
    <g key={key} fill={c}>
      <rect x={x} width="6" y={top} height={h} />
      <rect x={x + 2} width="1" y={top} height={h} fill="#fff" fillOpacity="0.35" />
    </g>
  );
};

const AwesomePlot = () => (
  <Plot>
    <g transform="translate(-23,-702)">
      <Years top={702} height={83} />
      <Rows at={[708.5, 725.5, 754.5, 769.5]} />
      {AO_SIG.map((v, i) => bar(14 + i, v, i < 7 || v > AO_SIG[i - 1] ? "#fcd4d4" : "#ccfccc", `s${i}`))}
      {AO.map((v, i) => {
        if (i === 0) return null;
        const up = v < AO[i - 1];
        return bar(20 + i, v, v < 690 ? (up ? "#1414f4" : "#ff00e8") : up ? "#0a9a90" : "#f81414", `f${i}`);
      })}
      <path d="M23 740H1387" stroke="#1414f0" strokeWidth="1.500" />
      <Runs from={20} data={AO} width={2.5} pick={(a, b) => (b < a ? "#06063a" : "#b400b0")} />
      <Runs from={14} data={AO_SIG} width={2.5} pick={(a, b) => (b <= a ? "#60f860" : "#ff9600")} />
      <rect x="1387" y="734" width="3" height="6" fill="#ff00e8" />
      {[[21, 790], [42, 663], [58, 722], [89, 713], [124, 730], [142, 703], [150, 738], [172, 713]].map(([q, v]) => <Arrow key={q} x={qx(q)} y={qy(v)} up c="#00f0f8" />)}
      {[[37, 661], [44, 645], [77, 689], [102, 653], [141, 703], [144, 716], [170, 711]].map(([q, v]) => <Arrow key={q} x={qx(q)} y={qy(v)} c="#fff000" />)}
    </g>
  </Plot>
);

const FORCE = [[-1, 2], [4, 7], [20, 22], [28, 28], [31, 33], [35, 38], [42, 52], [67, 68], [70, 71], [81, 84], [92, 99], [101, 102], [105, 105], [107, 107], [111, 112], [114, 118], [132, 132], [134, 134], [141, 141], [145, 147], [153, 153], [159, 162], [169, 172], [180, 181]];
const ForcePlot = () => (
  <Plot>
    <g transform="translate(-23,-785)">
      <rect x="23" y="785" width="1367" height="46" fill="#fefc86" />
      {blocks(FORCE, 785, 46, "#3efc3e")}
      <Years top={785} height={46} />
      <path d="M23 809.500H1387" stroke="#222" />
    </g>
  </Plot>
);

/* ---------- value scales ---------- */

type Mark = { t: string; y: number; c?: string; box?: boolean; w?: number };
const ValueScale = ({ top, marks }: { top: number; marks: Mark[] }) => (
  <Scale>
    {marks.map(({ t, y, c = "#222", box, w = 33 }, i) => (
      <g key={i}>
        <path d={`M0 ${y - top + 0.5}h4`} stroke={box ? c : "#667"} />
        {box && <rect x="4.500" y={y - top - 5.5} width={w - 6} height="11" fill="#fff" stroke="#7d95a0" />}
        <text x="6" y={y - top + 3} fill={c} fontSize={t.length > 5 ? 7 : 8}>{t}</text>
      </g>
    ))}
  </Scale>
);
const es = (n: number) => String(n).replace(".", ",");

const CloseDot = () => (
  <svg width="9" height="9" viewBox="0 0 9 9" aria-hidden>
    <circle cx="4.500" cy="4.500" r="4.300" fill="#41688f" />
    <path d="M2.800 2.800 6.200 6.200M6.200 2.800 2.800 6.200" stroke="#fff" strokeWidth="1.200" />
  </svg>
);
const PanelTabs = ({ name, fill }: { name: string; fill: string }) => (
  <Tabs>
    <Tab as="div">
      <IconButton aria-label={`Cerrar ${name}`}><CloseDot /></IconButton>
    </Tab>
    <Tab as="div"><Swatch $fill={fill} />{name}</Tab>
  </Tabs>
);

const INTERVALS = ["12s", "144s", "1m", "12m", "56m", "1h", "4h", "D", "W", "M", "Q"];

export default function App() {
  return (
    <>
      <GlobalStyle />
      <Page>
        <Toolbar>
          <Group $pad={1}>
            <IconButton aria-label="Velas">
              <Ico s={13}><path d="M3 6v8M8 4v8M13 1v9" stroke="#107818" /><path d="M3 8v4M8 6v4M13 3v5" stroke="#20a828" strokeWidth="3" /></Ico>
            </IconButton>
            <IconButton aria-label="Lista">
              <Ico s={12}><path d="M3 2h3v4H3zM9 2h3v4H9zM3 9h3v4H3zM9 9h3v4H9z" stroke="#56707c" fill="#8fa8b3" /></Ico>
            </IconButton>
          </Group>
          <Group>
            <Picker $w={43}>
              <select aria-label="Valor"><option>GBPUSD</option></select>
              <Chevron />
            </Picker>
          </Group>
          <Group>
            {INTERVALS.map((t) => <TimeButton key={t} $on={t === "Q"}>{t}</TimeButton>)}
          </Group>
          <Group>
            <Picker $w={49}>
              <select aria-label="Periodo"><option>1 trimestre</option></select>
              <Chevron />
            </Picker>
          </Group>
          <Group>
            {["5kU", "10kU", "35kU"].map((t) => <TimeButton key={t} $on={t === "10kU"}>{t}</TimeButton>)}
          </Group>
          <Group>
            <Picker $w={64}>
              <select aria-label="Unidades"><option>10 k unidades</option></select>
              <Chevron />
            </Picker>
          </Group>
          <Group $pad={2}>
            <PlainButton>
              <Ico s={14}>
                <path d="M1 6c4-6 6 4 14-1" stroke="#e03040" strokeWidth="1.500" />
                <path d="M1 3c5 0 6 7 14 5" stroke="#20a030" strokeWidth="1.500" />
                <path d="M1 15v-4h3v4zM8 15v-3h3v3z" fill="#20c030" stroke="none" />
                <path d="M5 15v-3h3v3zM12 15v-4h3v4z" fill="#e02020" stroke="none" />
              </Ico>
              Indicadores
            </PlainButton>
          </Group>
          <Group>
            <IconButton aria-label="Más indicadores"><Chevron /></IconButton>
          </Group>
          <Group $open>
            <Ico s={13}><rect x="4" y="3" width="9" height="10" fill="#f4f4f4" stroke="#bbb" /><path d="M8.500 5v1.500M8.500 8v4" stroke="#777" strokeWidth="1.800" /></Ico>
            <svg width="9" height="8" viewBox="0 0 9 8" aria-hidden><circle cx="4.500" cy="4" r="2.500" fill="#8a7f86" stroke="#667" /></svg>
            <Change>+0,16 %</Change>
            <DateText>20 feb 2026</DateText>
            <PairTag>GBP/USD</PairTag>
          </Group>
          <Spacer />
          <Group $gap={5} $pad={2} $open>
            <Ico s={13}><path d="M3 9a5 5 0 0 1 8-5l2 2M13 2v4H9" stroke="#18a030" strokeWidth="2" /><path d="M13 8a5 5 0 0 1-8 5l-2-2M3 15v-4h4" stroke="#e02828" strokeWidth="2" /></Ico>
            <IconButton aria-label="Minimizar"><Ico s={8}><path d="M2 12h12" stroke="#668" strokeWidth="2" /></Ico></IconButton>
            <IconButton aria-label="Restaurar"><Ico s={8}><path d="M2 6h8v8H2zM6 6V2h8v8h-4" stroke="#668" strokeWidth="2" /></Ico></IconButton>
            <IconButton aria-label="Cerrar"><Ico s={8}><path d="M2 2l12 12M14 2 2 14" stroke="#668" strokeWidth="2" /></Ico></IconButton>
          </Group>
        </Toolbar>

        <Middle>
          <Sidebar aria-label="Herramientas de dibujo">
            <Fold aria-label="Subir"><Chevron up /></Fold>
            <ToolList>
              {tools.map(([name, art], i) => (
                <Tool key={name} aria-label={name} $on={i === 0}><Ico s={15}>{art}</Ico></Tool>
              ))}
            </ToolList>
            <NextTool>
              <svg width="6" height="3" viewBox="0 0 6 3" aria-hidden><path d="M0 3 3 0l3 3z" fill="#f0a020" /></svg>
            </NextTool>
            <Fold aria-label="Bajar"><Chevron /></Fold>
            <SideFoot>
              <IconButton aria-label="Ajustes"><Gear /></IconButton>
              <IconButton aria-label="Más"><Ico s={13}><path d="M2 7h2M7 7h2M12 7h2" strokeWidth="2.500" /><path d="M10 12h5l-2.500 3z" fill="#222" stroke="none" /></Ico></IconButton>
            </SideFoot>
          </Sidebar>

          <Charts>
            <Panel>
              <PricePlot />
              <ValueScale
                top={19}
                marks={[
                  ...PRICES.filter((p) => p !== 1.3).map((p) => ({ t: es(p), y: Math.round(priceY(p)) })),
                  { t: "1,32319", y: 403, c: "#008a18", box: true },
                  { t: "1,30740", y: 410, c: "#c00018", box: true },
                  { t: "1,30450", y: 416, c: "#946400", box: true },
                ]}
              />
              <Title>Q<br />GBP/USD</Title>
              <Source>IT-Finance.com - Tiempo Real</Source>
              <Tabs>
                <Tab as="div">
                  <IconButton aria-label="Añadir"><Ico s={9}><rect x="1" y="1" width="14" height="14" fill="#fff" stroke="#999" /><path d="M8 3v10M3 8h10" stroke="#e02020" strokeWidth="3.500" /></Ico></IconButton>
                  <IconButton aria-label="Exportar"><Ico s={9}><rect x="1" y="1" width="14" height="14" fill="#fff" stroke="#999" /><path d="M8 14V5M4 8l4-5 4 5" stroke="#18a020" strokeWidth="3" /></Ico></IconButton>
                  <IconButton aria-label="Cerrar precio"><CloseDot /></IconButton>
                </Tab>
                <Tab><Tick type="checkbox" />Precio</Tab>
                <Tab as="div">
                  <IconButton aria-label="Lista de precios"><Ico s={8}><path d="M1 3h2M1 8h2M1 13h2M6 3h9M6 8h9M6 13h9" strokeWidth="2" /></Ico></IconButton>
                </Tab>
                <Tab><Tick type="checkbox" />Cierre (W)</Tab>
                <Tab as="div"><Swatch $fill="#748c98" />Tunel Domenec v4 (t t t t t)</Tab>
                <Tab as="div"><Swatch $fill="linear-gradient(90deg,#f0c 0 2px,#e02020 2px 3px,#fff000 3px 5px,#20c020 5px 6px,#000 6px)" />Control Total Doc v.6</Tab>
                <Tab as="div"><Swatch $fill="#000" />Multi Avisos (3 f 3 1,5 70 f f)</Tab>
              </Tabs>
            </Panel>

            <Panel>
              <TrainPlot />
              <ValueScale
                top={516}
                marks={[
                  { t: "60", y: 562 }, { t: "40", y: 581 },
                  { t: "100", y: 525, box: true, w: 22 },
                  { t: "80", y: 543 },
                  { t: "83,208", y: 537, box: true },
                  { t: "79,924", y: 549, c: "#d81020", box: true },
                  { t: "50", y: 572, c: "#1414c0", box: true, w: 18 },
                  { t: "28,966", y: 588, c: "#d81020", box: true },
                  { t: "20", y: 602, box: true, w: 18 },
                  { t: "27,204", y: 594, box: true },
                  { t: "0", y: 618, box: true, w: 14 },
                ]}
              />
              <PanelTabs name="Sistema de trenes Doc v4 (f f)" fill="linear-gradient(90deg,#888 0 2px,#000 2px 5px,#eee 5px)" />
            </Panel>

            <Panel>
              <WillyPlot />
              <ValueScale
                top={624}
                marks={[
                  { t: "0", y: 630, box: true, w: 14 },
                  { t: "-25", y: 645, c: "#1414c0", box: true, w: 21 },
                  { t: "-60", y: 671 },
                  { t: "-50", y: 665, c: "#1414c0", box: true, w: 20 },
                  { t: "-75", y: 682, c: "#d81020", box: true, w: 20 },
                  { t: "-32,783", y: 653, c: "#1414c0", box: true },
                  { t: "-100", y: 696, box: true, w: 25 },
                ]}
              />
              <PanelTabs name="Willy Doc (t)" fill="#748c98" />
            </Panel>

            <Panel>
              <AwesomePlot />
              <ValueScale
                top={702}
                marks={[
                  { t: "0,4", y: 709 }, { t: "0,2", y: 724 }, { t: "-0,2", y: 755 }, { t: "-0,4", y: 770 }, { t: "-0,6", y: 780 },
                  { t: "0,0784", y: 730, c: "#b400b0", box: true },
                  { t: "0,0295", y: 737, c: "#50e050", box: true },
                  { t: "0", y: 745, c: "#e000d0", box: true, w: 14 },
                ]}
              />
              <PanelTabs name="Awesome Evolution Doc" fill="#748c98" />
            </Panel>

            <Panel>
              <ForcePlot />
              <ValueScale top={785} marks={[{ t: "0,505", y: 789 }, { t: "0,5000", y: 809, box: true }, { t: "0,495", y: 826 }]} />
              <PanelTabs name="Barra Fuerza Fondo Mercado v4 (f)" fill="linear-gradient(90deg,#000 0 3px,#888 3px 5px,#ccc 5px)" />
            </Panel>

            <YearRow>
              {GRID_X.slice(0, 26).map((x, i) => (
                <g key={x}>
                  <path d={`M${x - 23} 0v2`} stroke="#667" />
                  <text x={x - 23} y="10" textAnchor="middle" fill="#222">{1980 + 2 * i}</text>
                </g>
              ))}
            </YearRow>
          </Charts>
        </Middle>

        <Footer>
          <PencilCell><IconButton aria-label="Dibujo"><Pencils /></IconButton></PencilCell>
          <FootTools>
            <IconButton aria-label="Compartir"><Ico s={14}><path d="M4 8 12 3M4 8l8 5" stroke="#fff" strokeWidth="1.500" /><g fill="#fff" stroke="#7a8a92"><circle cx="4" cy="8" r="2.500" /><circle cx="12" cy="3" r="2.500" /><circle cx="12" cy="13" r="2.500" /></g></Ico></IconButton>
            <IconButton aria-label="Chat"><Ico s={14}><rect x="1" y="2" width="10" height="7" rx="1" fill="#6a9ae8" stroke="#3a6ac0" /><path d="M5 6h10v7h-2v3l-3-3H5z" fill="#4a80e0" stroke="#2050b0" /><path d="M7 9h6" stroke="#fff" strokeDasharray="1 1" /></Ico></IconButton>
            <IconButton aria-label="Informe"><Ico s={14}><rect x="3" y="1" width="11" height="14" fill="#e4e4e4" stroke="#555" /><path d="M5 4h5M5 7h7M5 12h7" stroke="#555" /><path d="M9 9l4-3" stroke="#e02020" strokeWidth="2" /><path d="M5 9h4" stroke="#20a020" strokeWidth="2" /></Ico></IconButton>
            <IconButton aria-label="Órdenes"><Ico s={14}><path d="M1 3h7M3 6.500h5M1 10h7M4 13.500h4" stroke="#18b828" strokeWidth="2.800" /><path d="M8 3h5M8 6.500h7M8 10h4M8 13.500h6" stroke="#e03030" strokeWidth="2.800" /></Ico></IconButton>
            <IconButton aria-label="Ventanas"><Ico s={14}><rect x="1" y="1" width="9" height="8" fill="#eaf2ff" stroke="#2a60c0" /><rect x="5" y="6" width="10" height="9" fill="#fff" stroke="#2a60c0" /><path d="M1 2.500h9M5 7.500h10" stroke="#2a60c0" strokeWidth="2" /><path d="M7 13l2-3 2 2 3-3" stroke="#20a030" /></Ico></IconButton>
            <IconButton aria-label="Contraer"><Ico s={9}><path d="M7 3 2 8l5 5M14 3 9 8l5 5" strokeWidth="1.500" /></Ico></IconButton>
          </FootTools>
          <ScrollBar>
            <ScrollEnd aria-label="Desplazar a la izquierda"><Ico s={8}><path d="M10 3 5 8l5 5" strokeWidth="2.500" /></Ico></ScrollEnd>
            <Thumb />
            <ScrollEnd aria-label="Desplazar a la derecha"><Ico s={8}><path d="M6 3l5 5-5 5" strokeWidth="2.500" /></Ico></ScrollEnd>
          </ScrollBar>
          <FootTools $gap={4}>
            <IconButton aria-label="Deshacer"><Ico s={14}><path d="M6 2 2 6l4 4M2 6h7c4 0 5 4 3 8" stroke="#6a9ad0" strokeWidth="2" /></Ico></IconButton>
            <IconButton aria-label="Rehacer"><Ico s={14}><path d="M10 2l4 4-4 4M14 6H7c-4 0-5 4-3 8" stroke="#78a6cc" strokeWidth="2" /></Ico></IconButton>
            <IconButton aria-label="Configurar"><Ico s={14}><path d="M9 1v9M13 3v10" stroke="#18b828" strokeWidth="3" /><path d="M2 14l7-7" stroke="#e02020" strokeWidth="3.500" /><circle cx="10" cy="6" r="2.500" fill="#ddd" stroke="#555" /></Ico></IconButton>
            <IconButton aria-label="Ajustar zoom"><Ico s={14}>{lens}<path d="M1 14h7M14.500 1v7" stroke="#1a1ae0" strokeWidth="1.500" /></Ico></IconButton>
            <IconButton aria-label="Alejar"><Ico s={14}>{lens}<path d="M4.500 6.500h4" stroke="#1a1ae0" strokeWidth="1.500" /></Ico></IconButton>
            <IconButton aria-label="Acercar"><Ico s={14}>{lens}<path d="M4.500 6.500h4M6.500 4.500v4" stroke="#1a1ae0" strokeWidth="1.500" /></Ico></IconButton>
            <IconButton aria-label="Ir al final"><Ico s={14}><path d="M2 3h13" strokeWidth="2" strokeDasharray="2 1" /><path d="M8 6v7M5 10l3 4 3-4" stroke="#2a50c0" strokeWidth="2" /></Ico></IconButton>
          </FootTools>
        </Footer>
      </Page>
    </>
  );
}
